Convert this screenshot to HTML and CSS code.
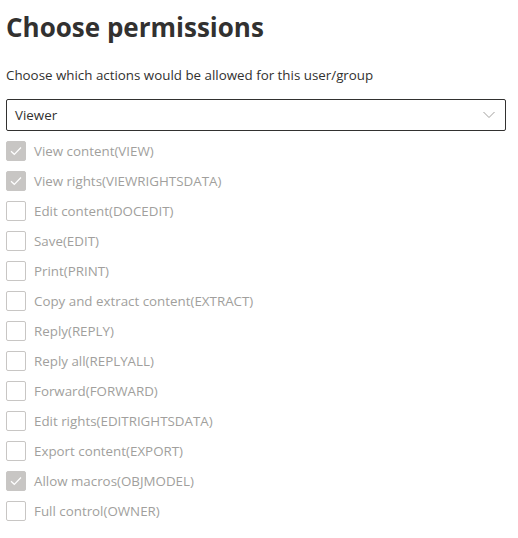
FILE: index.html
```html
<!DOCTYPE html>
<html>
<head>
<meta charset="utf-8">
<link rel="stylesheet" href="styles.css">
</head>
<body>
<div class="panel">
  <h1 class="title">Choose permissions</h1>
  <p class="subtitle">Choose which actions would be allowed for this user/group</p>
  <div class="dropdown">
    <span class="dropdown-value">Viewer</span>
    <svg class="chevron" width="12" height="8" viewBox="0 0 12 8"><path d="M0.5 1 L6 6.5 L11.5 1" fill="none" stroke="#a19f9d" stroke-width="1"/></svg>
  </div>
  <ul class="perms">
    <li class="perm checked"><span class="box"><svg width="12" height="10" viewBox="0 0 12 10"><path d="M1 5.2 L4.3 8.3 L11 1.5" fill="none" stroke="#fff" stroke-width="1.2"/></svg></span><span class="label">View content(VIEW)</span></li>
    <li class="perm checked"><span class="box"><svg width="12" height="10" viewBox="0 0 12 10"><path d="M1 5.2 L4.3 8.3 L11 1.5" fill="none" stroke="#fff" stroke-width="1.2"/></svg></span><span class="label">View rights(VIEWRIGHTSDATA)</span></li>
    <li class="perm"><span class="box"></span><span class="label">Edit content(DOCEDIT)</span></li>
    <li class="perm"><span class="box"></span><span class="label">Save(EDIT)</span></li>
    <li class="perm"><span class="box"></span><span class="label">Print(PRINT)</span></li>
    <li class="perm"><span class="box"></span><span class="label">Copy and extract content(EXTRACT)</span></li>
    <li class="perm"><span class="box"></span><span class="label">Reply(REPLY)</span></li>
    <li class="perm"><span class="box"></span><span class="label">Reply all(REPLYALL)</span></li>
    <li class="perm"><span class="box"></span><span class="label">Forward(FORWARD)</span></li>
    <li class="perm"><span class="box"></span><span class="label">Edit rights(EDITRIGHTSDATA)</span></li>
    <li class="perm"><span class="box"></span><span class="label">Export content(EXPORT)</span></li>
    <li class="perm checked"><span class="box"><svg width="12" height="10" viewBox="0 0 12 10"><path d="M1 5.2 L4.3 8.3 L11 1.5" fill="none" stroke="#fff" stroke-width="1.2"/></svg></span><span class="label">Allow macros(OBJMODEL)</span></li>
    <li class="perm"><span class="box"></span><span class="label">Full control(OWNER)</span></li>
  </ul>
</div>
</body>
</html>
```

FILE: styles.css
```css
html, body {
  margin: 0;
  padding: 0;
  background: #ffffff;
}
.panel {
  padding: 7px 12px 0 6px;
  font-family: "Open Sans", "Noto Sans", sans-serif;
  color: #323130;
}
.title {
  margin: 0;
  font-size: 26px;
  font-weight: 700;
  line-height: 40px;
  color: #323130;
}
.subtitle {
  margin: 18px 0 0 0;
  font-size: 13.35px;
  line-height: 20px;
}
.dropdown {
  margin-top: 14px;
  height: 30px;
  border: 1px solid #323130;
  border-radius: 2px;
  display: flex;
  align-items: center;
  justify-content: space-between;
  padding: 0 8px 0 8px;
}
.dropdown-value {
  font-size: 13.35px;
  color: #323130;
}
.chevron {
  margin-right: 2px;
}
.perms {
  list-style: none;
  margin: 10px 0 0 0;
  padding: 0;
  display: flex;
  flex-direction: column;
  gap: 10px;
}
.perm {
  display: flex;
  align-items: center;
  height: 20px;
}
.box {
  box-sizing: border-box;
  width: 20px;
  height: 20px;
  border: 1px solid #c8c6c4;
  border-radius: 2px;
  background: #fff;
  display: flex;
  align-items: center;
  justify-content: center;
  flex: none;
}
.checked .box {
  background: #c8c6c4;
  border-color: #c8c6c4;
}
.label {
  margin-left: 8px;
  font-size: 13.35px;
  color: #a19f9d;
}
```
